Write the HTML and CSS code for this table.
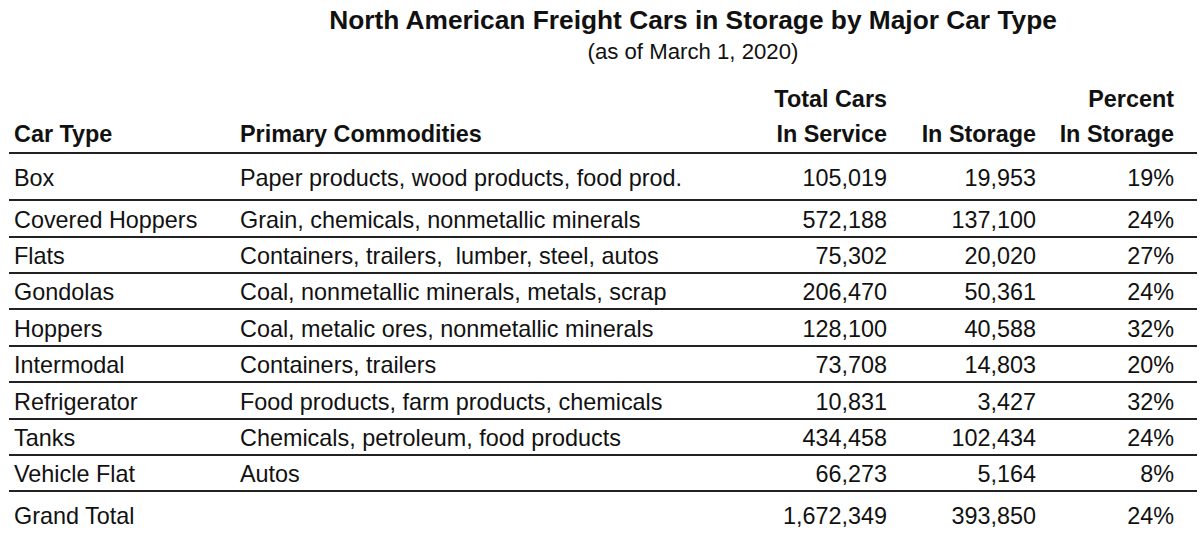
FILE: index.html
```html
<!DOCTYPE html>
<html lang="en">
<head>
<meta charset="utf-8">
<title>North American Freight Cars in Storage by Major Car Type</title>
<link rel="stylesheet" href="styles.css">
</head>
<body>
<div class="page">
  <header class="caption">
    <h1 class="title">North American Freight Cars in Storage by Major Car Type</h1>
    <p class="subtitle">(as of March 1, 2020)</p>
  </header>
  <table class="freight">
    <colgroup>
      <col class="c-type">
      <col class="c-comm">
      <col class="c-serv">
      <col class="c-stor">
      <col class="c-pct">
    </colgroup>
    <thead>
      <tr>
        <th class="left">Car Type</th>
        <th class="left">Primary Commodities</th>
        <th class="num"><span class="ln">Total Cars</span><span class="ln">In Service</span></th>
        <th class="num">In Storage</th>
        <th class="num pct"><span class="ln">Percent</span><span class="ln">In Storage</span></th>
      </tr>
    </thead>
    <tbody>
      <tr class="first">
        <td>Box</td><td>Paper products, wood products, food prod.</td>
        <td class="num">105,019</td><td class="num">19,953</td><td class="num pct">19%</td>
      </tr>
      <tr>
        <td>Covered Hoppers</td><td>Grain, chemicals, nonmetallic minerals</td>
        <td class="num">572,188</td><td class="num">137,100</td><td class="num pct">24%</td>
      </tr>
      <tr>
        <td>Flats</td><td>Containers, trailers,&nbsp; lumber, steel, autos</td>
        <td class="num">75,302</td><td class="num">20,020</td><td class="num pct">27%</td>
      </tr>
      <tr>
        <td>Gondolas</td><td>Coal, nonmetallic minerals, metals, scrap</td>
        <td class="num">206,470</td><td class="num">50,361</td><td class="num pct">24%</td>
      </tr>
      <tr>
        <td>Hoppers</td><td>Coal, metalic ores, nonmetallic minerals</td>
        <td class="num">128,100</td><td class="num">40,588</td><td class="num pct">32%</td>
      </tr>
      <tr>
        <td>Intermodal</td><td>Containers, trailers</td>
        <td class="num">73,708</td><td class="num">14,803</td><td class="num pct">20%</td>
      </tr>
      <tr>
        <td>Refrigerator</td><td>Food products, farm products, chemicals</td>
        <td class="num">10,831</td><td class="num">3,427</td><td class="num pct">32%</td>
      </tr>
      <tr>
        <td>Tanks</td><td>Chemicals, petroleum, food products</td>
        <td class="num">434,458</td><td class="num">102,434</td><td class="num pct">24%</td>
      </tr>
      <tr>
        <td>Vehicle Flat</td><td>Autos</td>
        <td class="num">66,273</td><td class="num">5,164</td><td class="num pct">8%</td>
      </tr>
      <tr class="total">
        <td>Grand Total</td><td></td>
        <td class="num">1,672,349</td><td class="num">393,850</td><td class="num pct">24%</td>
      </tr>
    </tbody>
  </table>
</div>
</body>
</html>
```

FILE: styles.css
```css
* {
  box-sizing: border-box;
}

html, body {
  margin: 0;
  padding: 0;
  background: #ffffff;
}

body {
  font-family: "Liberation Sans", Arial, sans-serif;
  color: #111111;
}

.page {
  width: 1200px;
  height: 537px;
  overflow: hidden;
}

.caption {
  padding: 5px 0 0 186px;
  text-align: center;
}

.title {
  margin: 0;
  font-size: 26.3px;
  line-height: 30px;
  font-weight: bold;
}

.subtitle {
  margin: 4px 0 0;
  font-size: 22.2px;
  line-height: 26px;
}

.freight {
  margin: 17px 0 0 9px;
  width: 1188px;
  table-layout: fixed;
  border-collapse: separate;
  border-spacing: 0;
  font-size: 23.4px;
}

.c-type { width: 226px; }
.c-comm { width: 490px; }
.c-serv { width: 167px; }
.c-stor { width: 149px; }
.c-pct  { width: 156px; }

.freight th,
.freight td {
  padding: 0 5px;
  white-space: nowrap;
  border-bottom: 2px solid #222222;
}

.freight th {
  font-weight: bold;
  line-height: 34.7px;
  vertical-align: bottom;
  padding-bottom: 0.8px;
}

.freight th.left,
.freight td {
  text-align: left;
}

.ln {
  display: block;
}

.freight td {
  line-height: 27px;
  padding-top: 5.4px;
  padding-bottom: 2px;
}

.freight .num {
  text-align: right;
}

.freight .pct {
  padding-right: 23px;
}

.freight tr.first td {
  padding-top: 10.4px;
  padding-bottom: 7.6px;
}

.freight tr.total td {
  padding-top: 10.7px;
  border-bottom: none;
}
```
